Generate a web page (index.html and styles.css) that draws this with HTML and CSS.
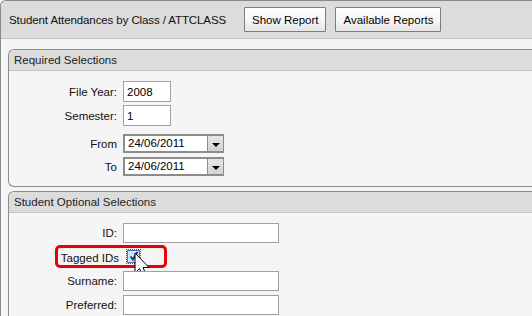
FILE: index.html
```html
<!DOCTYPE html>
<html lang="en">
<head>
    <meta charset="UTF-8">
    <title>Student Attendances by Class</title>
    <link rel="stylesheet" href="styles.css">
</head>
<body>
    <div class="window">
        <div class="window-header">
            <span class="window-title">Student Attendances by Class / ATTCLASS</span>
            <button class="btn">Show Report</button>
            <button class="btn">Available Reports</button>
        </div>

        <div class="window-body">
            <div class="section">
                <div class="section-head">Required Selections</div>
                <div class="section-body section-required">
                    <div class="row row-year">
                        <label class="row-label">File Year:</label>
                        <input type="text" class="text-input short" value="2008">
                    </div>
                    <div class="row row-semester">
                        <label class="row-label">Semester:</label>
                        <input type="text" class="text-input short" value="1">
                    </div>
                    <div class="row row-from">
                        <label class="row-label">From</label>
                        <div class="date-input">
                            <span class="date-value">24/06/2011</span>
                            <span class="date-btn"><span class="arrow"></span></span>
                        </div>
                    </div>
                    <div class="row">
                        <label class="row-label">To</label>
                        <div class="date-input">
                            <span class="date-value">24/06/2011</span>
                            <span class="date-btn"><span class="arrow"></span></span>
                        </div>
                    </div>
                </div>
            </div>

            <div class="section">
                <div class="section-head">Student Optional Selections</div>
                <div class="section-body section-optional">
                    <div class="row row-id">
                        <label class="row-label">ID:</label>
                        <input type="text" class="text-input long">
                    </div>
                    <div class="row row-check">
                        <label class="row-label">Tagged IDs</label>
                        <span class="checkbox">
                            <svg width="11" height="11" viewBox="0 0 11 11">
                                <path d="M2.5 5.5 L4.8 8.5 L9.5 1" fill="none" stroke="#1f3c8c" stroke-width="2"/>
                            </svg>
                        </span>
                        <div class="highlight"></div>
                        <svg class="cursor" width="17" height="29" viewBox="0 0 17 29">
                            <path d="M1 1 L1 21 L5.5 16.5 L9.5 25 L12.5 23.5 L9 15.5 L15 15.5 Z" fill="#fff" stroke="#000" stroke-width="1" stroke-linejoin="miter"/>
                        </svg>
                    </div>
                    <div class="row row-surname">
                        <label class="row-label">Surname:</label>
                        <input type="text" class="text-input long">
                    </div>
                    <div class="row">
                        <label class="row-label">Preferred:</label>
                        <input type="text" class="text-input long">
                    </div>
                </div>
            </div>
        </div>
    </div>
</body>
</html>
```

FILE: styles.css
```css
body {
    margin: 0;
    font-family: "Liberation Sans", Arial, sans-serif;
    font-size: 11.5px;
    color: #000;
    background-color: #f5f5f5;
    height: 316px;
    overflow: hidden;
}
.window {
    height: 316px;
    border-top: 1px solid #8a8a8a;
    border-left: 1px solid #8a8a8a;
    border-top-left-radius: 6px;
    background-color: #f5f5f5;
    box-sizing: border-box;
}
.window-header {
    display: flex;
    align-items: center;
    height: 37px;
    padding-left: 8px;
    background-color: #dcdcdc;
    border-bottom: 1px solid #c4c4c4;
    border-top-left-radius: 6px;
}
.window-title {
    width: 235px;
    color: #111;
    letter-spacing: -0.1px;
}
.btn {
    height: 25px;
    margin-right: 9px;
    padding: 0 7px;
    font-family: inherit;
    font-size: 11.5px;
    color: #000;
    border: 1px solid #7d7d7d;
    border-radius: 1px;
    background: linear-gradient(#ffffff, #f6f6f6 55%, #e4e4e4);
}
.window-body {
    padding: 10px 0 0 7px;
}
.section {
    border: 1px solid #8c8c8c;
    border-right: none;
    border-top-left-radius: 6px;
    border-bottom-left-radius: 6px;
    margin-bottom: 4px;
}
.section-head {
    height: 20px;
    line-height: 21px;
    padding-left: 5px;
    background-color: #dcdcdc;
    border-bottom: 1px solid #c4c4c4;
    border-top-left-radius: 6px;
    color: #222;
}
.section-body {
    display: flex;
    flex-direction: column;
    padding: 10px 0 10px 0;
}
.row {
    display: flex;
    align-items: center;
    position: relative;
}
.row-year {
    margin-bottom: 3px;
}
.row-semester {
    margin-bottom: 8px;
}
.row-from {
    margin-bottom: 4px;
}
.row-id {
    margin-bottom: 3px;
}
.row-check {
    height: 22px;
    margin-bottom: 3px;
}
.row-surname {
    margin-bottom: 4px;
}
.row-label {
    width: 108px;
    margin-right: 6px;
    text-align: right;
    color: #111;
}
.text-input {
    box-sizing: border-box;
    height: 21px;
    padding: 0 3px;
    border: 1px solid #a0a0a0;
    background-color: #fff;
    font-family: inherit;
    font-size: 11.5px;
    color: #000;
    outline: none;
}
.text-input.short {
    width: 48px;
}
.text-input.long {
    width: 156px;
    height: 20px;
}
.date-input {
    display: flex;
    box-sizing: border-box;
    width: 101px;
    height: 19px;
    border: 2px solid #8c8c8c;
    border-right-width: 1px;
    background-color: #fff;
}
.date-value {
    flex: 1;
    padding-left: 3px;
    line-height: 15px;
}
.date-btn {
    display: flex;
    align-items: center;
    justify-content: center;
    width: 15px;
    border-left: 1px solid #8c8c8c;
    background: linear-gradient(#e6e6e6, #d2d2d2);
}
.arrow {
    width: 0;
    height: 0;
    border-left: 4px solid transparent;
    border-right: 4px solid transparent;
    border-top: 4px solid #000;
    margin-top: 2px;
}
.row-check .row-label {
    width: 110px;
    margin-right: 8px;
    padding-top: 1px;
}
.checkbox {
    display: inline-block;
    box-sizing: border-box;
    width: 13px;
    height: 13px;
    border: 1px solid #4f79b0;
    outline: 1px dotted #555;
    outline-offset: 0;
    background-color: #cfe5f8;
    margin-top: -1px;
    line-height: 0;
}
.highlight {
    position: absolute;
    left: 46px;
    top: -1px;
    width: 112px;
    height: 23px;
    box-sizing: border-box;
    border: 3px solid #e8000c;
    border-radius: 5px;
}
.cursor {
    position: absolute;
    left: 125px;
    top: 6px;
}
```
